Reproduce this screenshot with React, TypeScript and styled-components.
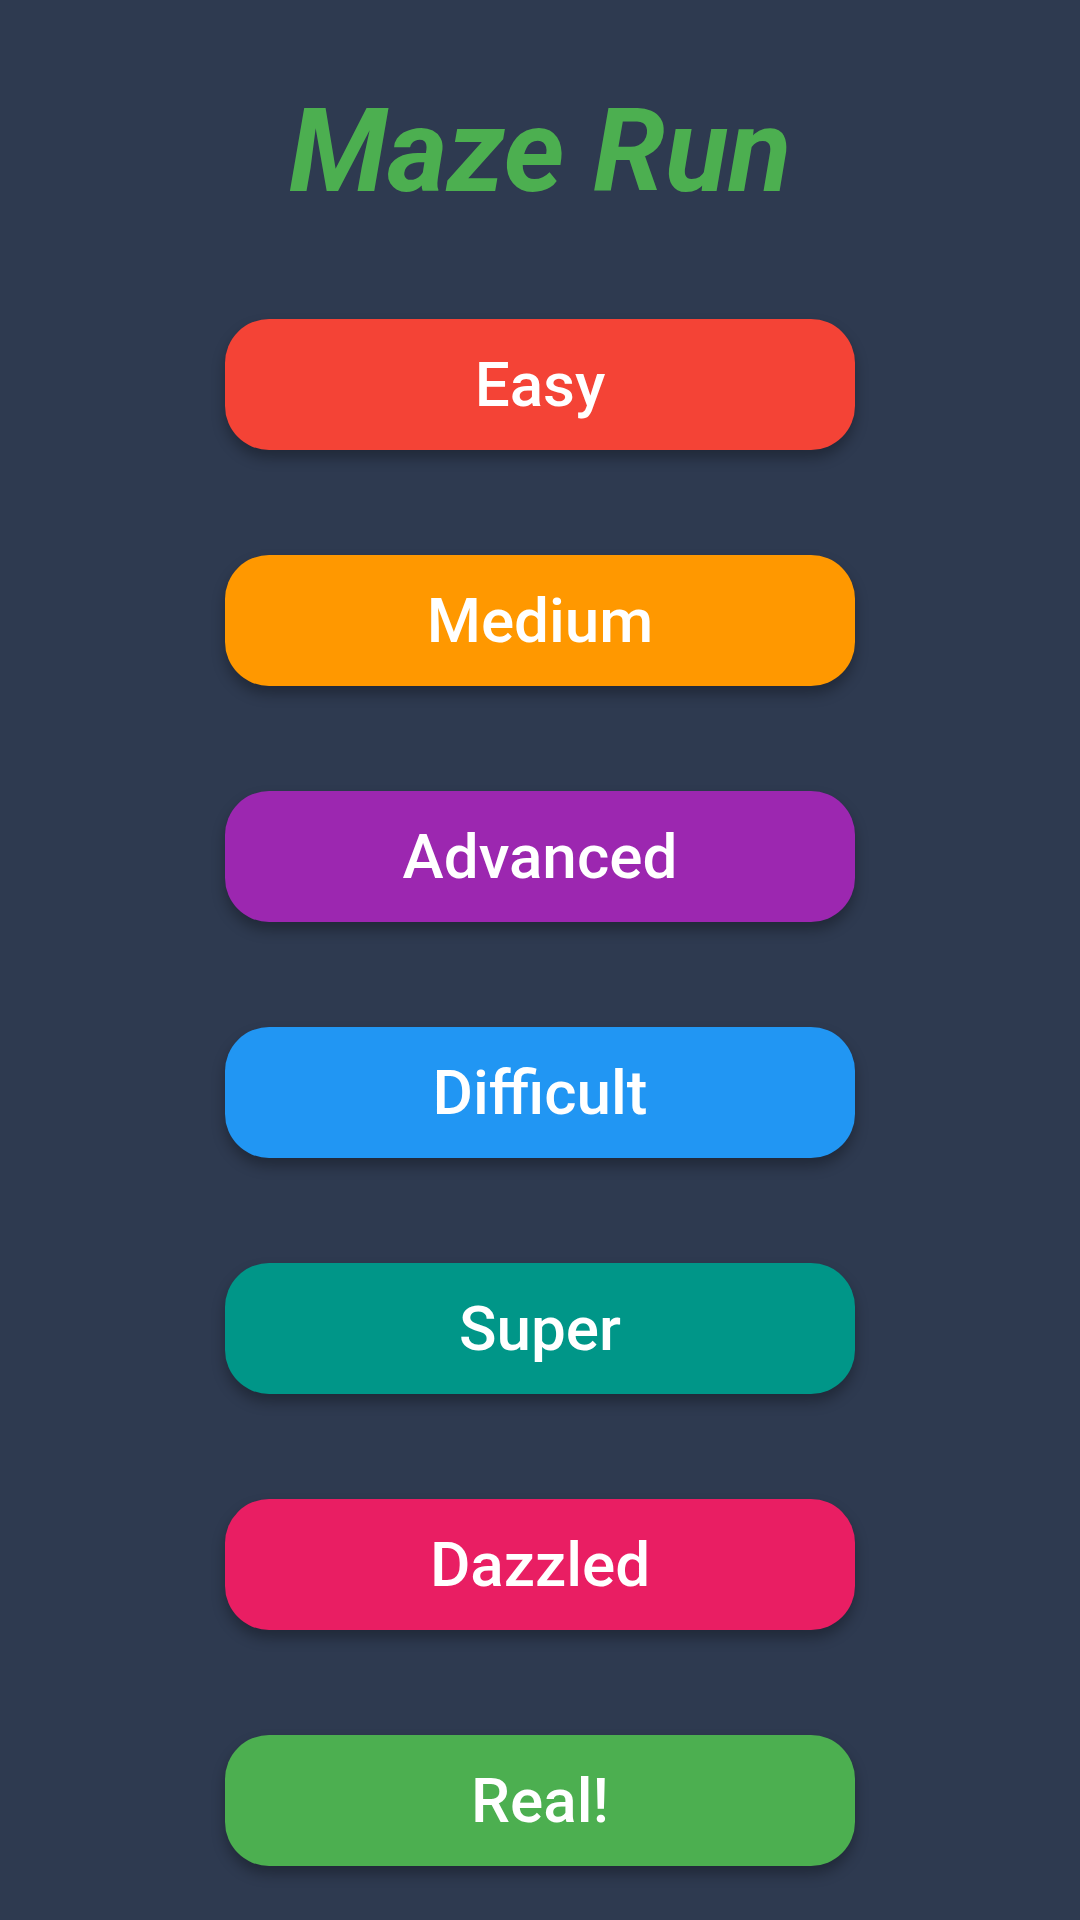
import React from "react";
import styled, { createGlobalStyle } from "styled-components";

const Global = createGlobalStyle`
  html, body { margin: 0; padding: 0; background: #2e3a50; }
  body { font-family: Roboto, "Noto Sans", sans-serif; }
`;

const Page = styled.div`
  width: 1080px;
  height: 1920px;
  background: #2e3a50;
  display: flex;
  flex-direction: column;
  align-items: center;
  box-sizing: border-box;
  padding-top: 76px;
  overflow: hidden;
`;

const Title = styled.h1`
  margin: 0;
  font-family: Roboto, sans-serif;
  font-style: italic;
  font-weight: 700;
  font-size: 116px;
  line-height: 150px;
  color: #4caf50;
`;

const Menu = styled.div`
  margin-top: 93px;
  display: flex;
  flex-direction: column;
  gap: 105px;
`;

const LevelButton = styled.button<{ $bg: string }>`
  width: 630px;
  height: 131px;
  border: none;
  border-radius: 44px;
  background: ${(p) => p.$bg};
  color: #ffffff;
  font-family: Roboto, sans-serif;
  font-weight: 500;
  font-size: 62px;
  display: flex;
  align-items: center;
  justify-content: center;
  box-shadow: 0 8px 14px rgba(0, 0, 0, 0.3);
  cursor: pointer;
  padding: 0;
`;

const levels = [
  { label: "Easy", color: "#f44336" },
  { label: "Medium", color: "#ff9800" },
  { label: "Advanced", color: "#9c27b0" },
  { label: "Difficult", color: "#2196f3" },
  { label: "Super", color: "#009688" },
  { label: "Dazzled", color: "#e91e63" },
  { label: "Real!", color: "#4caf50" },
];

export default function App() {
  return (
    <>
      <Global />
      <Page>
        <Title>Maze Run</Title>
        <Menu>
          {levels.map((l) => (
            <LevelButton key={l.label} $bg={l.color}>
              {l.label}
            </LevelButton>
          ))}
        </Menu>
      </Page>
    </>
  );
}
